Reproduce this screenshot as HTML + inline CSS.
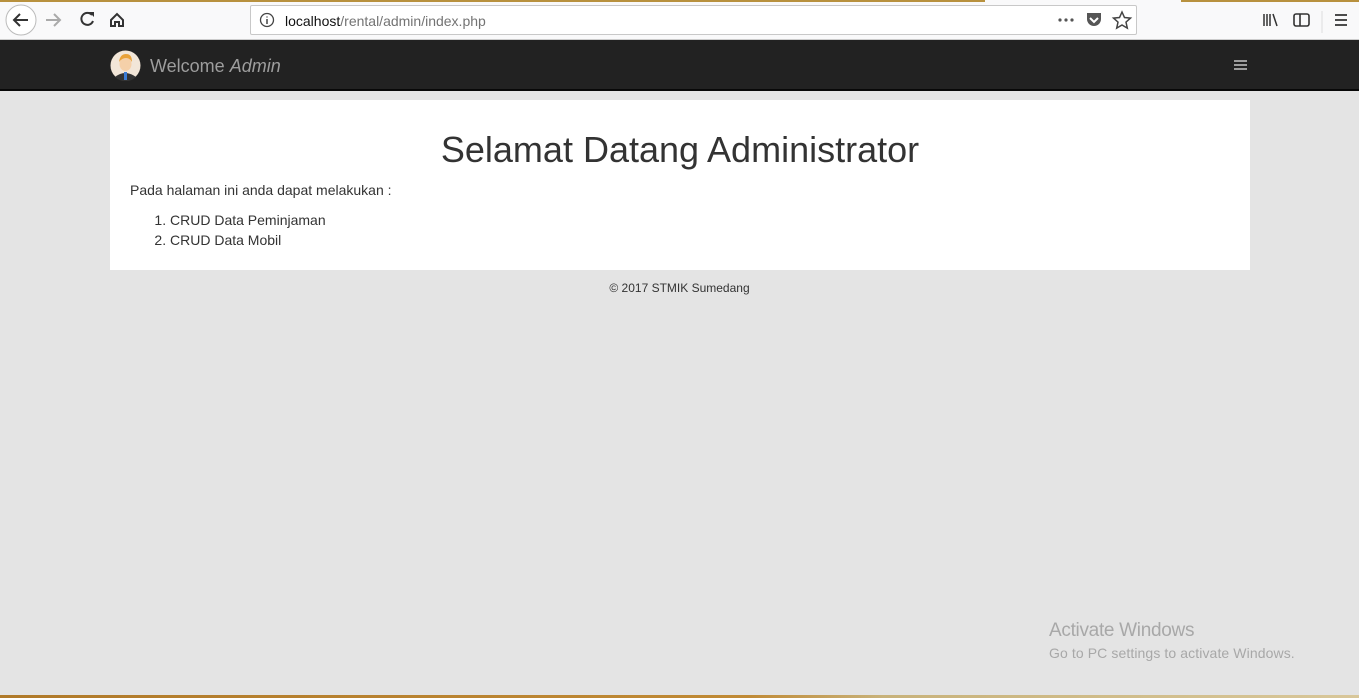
<!DOCTYPE html>
<html><head><style>
*{margin:0;padding:0;box-sizing:border-box}
body{width:1359px;height:698px;background:#e4e4e4;font-family:"Liberation Sans",sans-serif;position:relative;overflow:hidden}
.tb{position:absolute;left:0;top:0;width:1359px;height:40px;background:#f9f9fa;border-bottom:1px solid #ccc}
.gold{position:absolute;top:0;height:2px;background:#b8913e}
.url{position:absolute;left:250px;top:5px;width:887px;height:30px;background:#fff;border:1px solid #c8c8c8;border-radius:2px}
.url span{position:absolute;left:34px;top:7px;font-size:14px;color:#111}
.url span i{font-style:normal;color:#737373}
.nav{position:absolute;left:0;top:40px;width:1359px;height:51px;background:#222;border-bottom:2px solid #080808}
.wel{position:absolute;left:150px;top:56px;font-size:18px;color:#9d9d9d}
.panel{position:absolute;left:110px;top:100px;width:1140px;height:170px;background:#fff;color:#333}
h1{position:absolute;left:0;width:1140px;top:29px;text-align:center;font-weight:normal;font-size:36px;color:#333}
.p{position:absolute;left:20px;top:82px;font-size:14px}
ol{position:absolute;left:60px;top:110px;font-size:14px;line-height:20px}
.foot{position:absolute;left:0;width:1359px;top:281px;text-align:center;font-size:12px;color:#333}
.act{position:absolute;left:1049px;top:620px;color:#a8a8a8;font-size:19px;letter-spacing:-0.3px}
.act2{position:absolute;left:1049px;top:645px;color:#a8a8a8;font-size:14px;letter-spacing:0.1px}
.task{position:absolute;left:0;top:695px;width:1359px;height:3px;background:linear-gradient(90deg,#b07a2a,#c08a35 55%,#c8b27a 65%,#d8c79a)}
</style></head><body>
<div class="tb"></div>
<div class="gold" style="left:0;width:985px"></div>
<div class="gold" style="left:1181px;width:178px"></div>
<svg style="position:absolute;left:0;top:0" width="140" height="40">
<circle cx="21" cy="20" r="15" fill="#fff" stroke="#bbb"/>
<path d="M28 20H14M20 14l-6 6 6 6" stroke="#333" stroke-width="2" fill="none"/>
<path d="M60 20H46M54 14l6 6-6 6" stroke="#aaa" stroke-width="2" fill="none"/>
<path d="M92 15a6 6 0 1 0 1 6" stroke="#333" stroke-width="2" fill="none"/><path d="M89 12h5v5z" fill="#333"/>
<path d="M111 20l6-6 6 6v6h-4v-4h-4v4h-4z" stroke="#333" stroke-width="2" fill="none"/>
</svg>
<div class="url"><svg style="position:absolute;left:8px;top:6px" width="16" height="16"><circle cx="8" cy="8" r="6.5" fill="none" stroke="#444" stroke-width="1.3"/><path d="M8 7v5M8 4.5v1" stroke="#444" stroke-width="1.5"/></svg><span>localhost<i>/rental/admin/index.php</i></span></div>
<svg style="position:absolute;left:1050px;top:8px" width="309" height="26">
<circle cx="10" cy="12" r="1.6" fill="#555"/><circle cx="16" cy="12" r="1.6" fill="#555"/><circle cx="22" cy="12" r="1.6" fill="#555"/>
<path d="M37 5h14v6a7 7 0 0 1-14 0z" fill="#555"/><path d="M40 10l4 4 4-4" stroke="#fff" stroke-width="2" fill="none"/>
<path d="M72 4l2.5 5.5 6 .6-4.5 4 1.3 6-5.3-3.1-5.3 3.1 1.3-6-4.5-4 6-.6z" fill="none" stroke="#444" stroke-width="1.5"/>
<path d="M214 6v12M217 6v12M220 6v12M223 6l4 12" stroke="#333" stroke-width="1.5"/>
<rect x="244" y="6" width="15" height="12" rx="2" fill="none" stroke="#333" stroke-width="1.6"/><path d="M250 6v12" stroke="#333" stroke-width="1.6"/>
<path d="M272 3v22" stroke="#ddd"/>
<path d="M285 7h12M285 12h12M285 17h12" stroke="#333" stroke-width="1.8"/>
</svg>
<div class="nav"></div>
<svg style="position:absolute;left:110px;top:50px" width="31" height="31"><circle cx="15.5" cy="15.5" r="15" fill="#f2e6d8"/><path d="M5 27q10-8 21 0a15 15 0 0 1-21 0z" fill="#333"/><path d="M14 22h3v8h-3z" fill="#3a7bd5"/><ellipse cx="15.5" cy="14" rx="6" ry="7" fill="#f5d0a9"/><path d="M9 12q1-8 7-8t6 8q-2-4-6-4t-7 4z" fill="#e8a23a"/></svg>
<div class="wel">Welcome <i>Admin</i></div>
<svg style="position:absolute;left:1234px;top:59px" width="14" height="12"><path d="M0 2h13M0 6h13M0 10h13" stroke="#9d9d9d" stroke-width="2"/></svg>
<div class="panel">
<h1>Selamat Datang Administrator</h1>
<div class="p">Pada halaman ini anda dapat melakukan :</div>
<ol><li>CRUD Data Peminjaman</li><li>CRUD Data Mobil</li></ol>
</div>
<div class="foot">© 2017 STMIK Sumedang</div>
<div class="act">Activate Windows</div>
<div class="act2">Go to PC settings to activate Windows.</div>
<div class="task"></div>
</body></html>
